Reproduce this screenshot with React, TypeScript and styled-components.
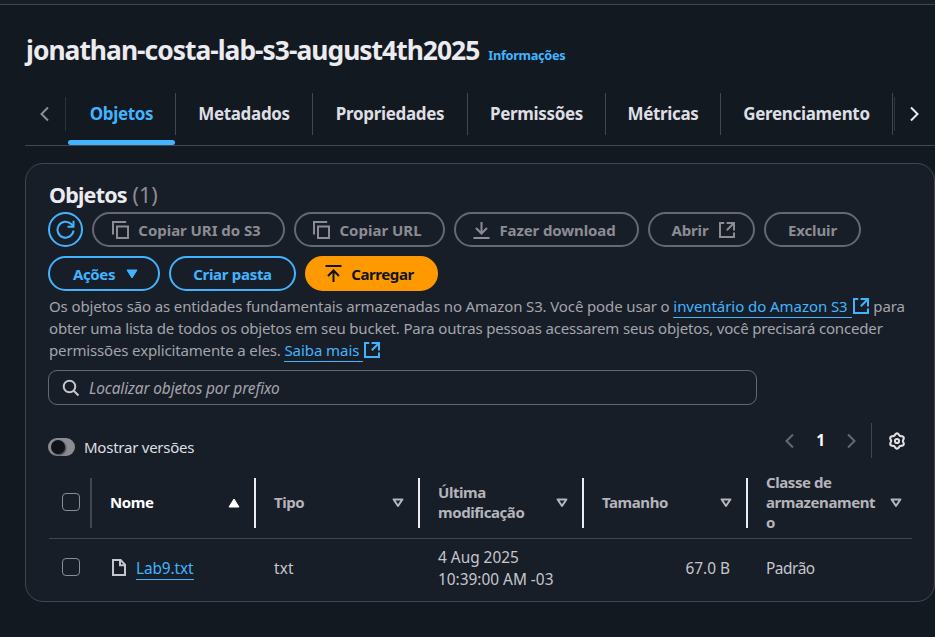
import React from "react";
import styled, { createGlobalStyle, css } from "styled-components";

const color = {
  page: "#131920",
  panel: "#181e27",
  line: "#424650",
  blue: "#42b4ff",
  orange: "#ff9900",
  muted: "#8c8c94",
  mutedLine: "#656871",
  text: "#c6c6cd",
  soft: "#a4a4ad",
  bright: "#ebebf0",
};

const GlobalStyle = createGlobalStyle`
  * { box-sizing: border-box; }
  body {
    margin: 0;
    background: ${color.page};
    color: ${color.text};
    font-family: "Noto Sans", sans-serif;
    font-size: 15.4px;
    line-height: 22px;
    overflow: hidden;
  }
`;

const Page = styled.div`
  width: 935px;
  height: 637px;
  overflow: hidden;
  display: flex;
  flex-direction: column;
`;

const TopStrip = styled.div`
  height: 5px;
  flex: none;
  background: #181d28;
  border-bottom: 1px solid ${color.line};
`;

const TitleBar = styled.header`
  display: flex;
  align-items: baseline;
  gap: 9px;
  height: 88px;
  padding: 27px 0 0 26px;
  flex: none;
  white-space: nowrap;
`;

const Title = styled.h1`
  margin: 0;
  font-size: 26.4px;
  line-height: 36px;
  letter-spacing: -0.98px;
  color: ${color.bright};
`;

const InfoLink = styled.a`
  font-size: 12.8px;
  font-weight: 700;
  letter-spacing: -0.33px;
  color: ${color.blue};
`;

const TabBar = styled.nav`
  display: flex;
  flex: none;
  height: 53px;
  margin-left: 25px;
  border-bottom: 1px solid ${color.line};
`;

const TabScroll = styled.div<{ $side: "left" | "right" }>`
  display: flex;
  align-items: center;
  justify-content: center;
  width: 41px;
  height: 34px;
  margin-top: 4px;
  padding-right: 2px;
  flex: none;
  color: ${(p) => (p.$side === "left" ? color.muted : color.bright)};
  ${(p) =>
    p.$side === "left"
      ? css`border-right: 1px solid #2d323c; margin-right: 2px;`
      : css`border-left: 1px solid #30353f; margin-left: 1px;`}
`;

const Tab = styled.div<{ $width: number; $active?: boolean }>`
  display: flex;
  flex-direction: column;
  justify-content: space-between;
  flex: none;
  width: ${(p) => p.$width}px;
  height: 52px;
  font-size: 17px;
  font-weight: 700;
  letter-spacing: -0.33px;
  color: ${(p) => (p.$active ? color.blue : "#dedee3")};
  &::after {
    content: "";
    height: 5px;
    width: ${(p) => p.$width - 1}px;
    border-radius: 3px;
    background: ${(p) => (p.$active ? color.blue : "transparent")};
  }
`;

const TabLabel = styled.span`
  display: flex;
  align-items: center;
  justify-content: center;
  height: 42px;
  border-right: 1px solid ${color.line};
  white-space: nowrap;
`;

const Panel = styled.main`
  flex: none;
  width: 910px;
  height: 439px;
  margin: 17px 0 0 25px;
  padding: 18px 22px 0 22px;
  border: 1px solid ${color.line};
  border-radius: 18px;
  background: ${color.panel};
`;

const PanelTitle = styled.h2`
  margin: 0 0 0 1px;
  font-size: 21.5px;
  line-height: 26px;
  height: 30px;
  letter-spacing: -0.8px;
  color: ${color.bright};
`;

const Count = styled.span`
  margin-left: 1px;
  font-weight: 400;
  letter-spacing: 0;
  color: ${color.muted};
`;

const ButtonRow = styled.div`
  display: flex;
  gap: 9px;
  margin-bottom: 9px;
`;

const Button = styled.button<{
  $kind?: "active" | "primary";
  $icon?: "start" | "end";
  $width: number;
  $gap?: number;
  $tracking?: number;
}>`
  display: flex;
  align-items: center;
  justify-content: center;
  gap: ${(p) => p.$gap ?? 9}px;
  flex: none;
  width: ${(p) => p.$width}px;
  height: 35px;
  padding: ${(p) => (p.$icon === "start" ? "0 4px 0 0" : p.$icon === "end" ? "0 0 0 3px" : "0")};
  border-radius: 18px;
  font: 700 15px/22px "Noto Sans", sans-serif;
  letter-spacing: ${(p) => p.$tracking ?? -0.15}px;
  white-space: nowrap;
  background: transparent;
  border: 2px solid ${color.mutedLine};
  color: ${color.muted};
  ${(p) => p.$kind === "active" && css`border-color: ${color.blue}; color: ${color.blue};`}
  ${(p) =>
    p.$kind === "primary" &&
    css`border-color: ${color.orange}; background: ${color.orange}; color: #0f141a;`}
`;

const Description = styled.p`
  margin: -5px 0 9px 0;
  width: 868px;
  font-size: 15px;
  color: ${color.soft};
  white-space: nowrap;
`;

const Line = styled.span<{ $tracking: number }>`
  display: block;
  height: 22px;
  padding-left: 1px;
  letter-spacing: ${(p) => p.$tracking}px;
`;

const TextLink = styled.a`
  color: ${color.blue};
  border-bottom: 1px solid ${color.blue};
`;

const InlineLink = styled(TextLink)`
  padding-bottom: 1px;
  letter-spacing: -0.06px;
`;

const InlineIcon = styled.span`
  display: inline-block;
  color: ${color.blue};
  line-height: 0;
  vertical-align: -2px;
  margin: 0 1px 0 1px;
`;

const SearchBox = styled.div`
  display: flex;
  align-items: center;
  gap: 9px;
  width: 709px;
  height: 35px;
  padding-left: 13px;
  border: 1px solid ${color.mutedLine};
  border-radius: 9px;
  color: ${color.text};
`;

const Placeholder = styled.em`
  padding-top: 2px;
  color: ${color.soft};
  letter-spacing: -0.11px;
`;

const ToolsRow = styled.div`
  display: flex;
  align-items: center;
  height: 35px;
  margin-top: 18px;
  color: ${color.bright};
`;

const Toggle = styled.span`
  width: 27px;
  height: 18px;
  margin: 13px 9px 0 0;
  padding: 2px 3px;
  border-radius: 9px;
  background: ${color.muted};
  &::after {
    content: "";
    display: block;
    width: 14px;
    height: 14px;
    border-radius: 50%;
    background: #0f141a;
    box-shadow: 1px 1px 2px #35363c;
  }
`;

const ToggleLabel = styled.span`
  margin-top: 13px;
  font-size: 15px;
  letter-spacing: -0.24px;
  color: #dedee3;
`;

const Pagination = styled.div`
  display: flex;
  align-items: center;
  gap: 21px;
  height: 35px;
  margin-left: auto;
  padding-right: 14px;
  color: ${color.mutedLine};
  border-right: 1px solid ${color.line};
`;

const CurrentPage = styled.b`
  padding-top: 1px;
  color: #fff;
  font-size: 15.4px;
`;

const Settings = styled.span`
  display: flex;
  padding: 0 6px 0 16px;
  color: #dedee3;
`;

const Table = styled.div`
  width: 863px;
  margin: 20px 0 0 1px;
`;

const Row = styled.div<{ $head?: boolean }>`
  display: grid;
  grid-template-columns: 43px 164px 164px 164px 164px 164px;
  align-items: center;
  height: ${(p) => (p.$head ? 61 : 59)}px;
  ${(p) => p.$head && css`padding-bottom: 10px; border-bottom: 1px solid ${color.line};`}
`;

const CheckCell = styled.div<{ $head?: boolean }>`
  display: flex;
  align-items: center;
  height: 50px;
  padding: 0 0 3px 13px;
  border-right: 2px solid ${(p) => (p.$head ? color.line : "transparent")};
`;

const Checkbox = styled.span`
  width: 18px;
  height: 18px;
  border: 1px solid ${color.muted};
  border-radius: 4px;
`;

const HeadCell = styled.div<{ $sorted?: boolean; $last?: boolean }>`
  display: flex;
  align-items: center;
  justify-content: space-between;
  height: 50px;
  padding: 0 ${(p) => (p.$last ? 8 : 14)}px 0 18px;
  border-right: 2px solid ${(p) => (p.$last ? "transparent" : "#ebebf0")};
  font-size: 15px;
  font-weight: 700;
  letter-spacing: -0.43px;
  line-height: 20px;
  white-space: nowrap;
  color: ${(p) => (p.$sorted ? "#fff" : "#b4b4bb")};
`;

const HeadText = styled.span`
  margin-top: -2px;
`;

const Cell = styled.div<{ $right?: boolean; $tracking?: number }>`
  display: flex;
  align-items: center;
  justify-content: ${(p) => (p.$right ? "flex-end" : "flex-start")};
  padding: 0 18px 0 18px;
  letter-spacing: ${(p) => p.$tracking ?? 0}px;
  white-space: nowrap;
`;

const FileCell = styled(Cell)`
  gap: 10px;
  padding-left: 20px;
`;

const FileIconSlot = styled.span`
  display: flex;
  padding-bottom: 2px;
`;

const FileLink = styled(TextLink)`
  height: 22px;
  line-height: 21px;
`;

const Chevron = ({ dir }: { dir: "left" | "right" }) => (
  <svg width="11" height="18" viewBox="0 0 11 18" fill="none" stroke="currentColor" strokeWidth="2">
    <path d={dir === "left" ? "M9 2.5 2.5 9 9 15.5" : "M2 2.5 8.5 9 2 15.5"} />
  </svg>
);

const RefreshIcon = () => (
  <svg width="19" height="19" viewBox="0 0 19 19" fill="none" stroke="currentColor" strokeWidth="2">
    <path d="M17.5 10.5A8 8 0 1 1 15.2 4L17.5 6.2" />
    <path d="M17.5 .8V6.7H11.5" />
  </svg>
);

const CopyIcon = () => (
  <svg width="17" height="18" viewBox="0 0 17 18" fill="none" stroke="currentColor" strokeWidth="2">
    <path d="M1 13.5V1H14.2" />
    <path d="M5 5.5H16V17H5Z" />
  </svg>
);

const DownloadIcon = () => (
  <svg width="17" height="18" viewBox="0 0 17 18" fill="none" stroke="currentColor" strokeWidth="2">
    <path d="M8.5 1V12M3 7 8.5 12.5 14 7M.5 17H16.5" />
  </svg>
);

const UploadIcon = () => (
  <svg width="17" height="18" viewBox="0 0 17 18" fill="none" stroke="currentColor" strokeWidth="2">
    <path d="M8.5 17V6M3 11 8.5 5.5 14 11M.5 1H16.5" />
  </svg>
);

const ExternalIcon = () => (
  <svg width="16" height="16" viewBox="0 0 16 16" fill="none" stroke="currentColor" strokeWidth="2">
    <path d="M5.2 1H1V15H15V10.6" />
    <path d="M7.6 1H15V8.4M15 1 7.8 8.2" />
  </svg>
);

const SearchIcon = () => (
  <svg width="18" height="18" viewBox="0 0 18 18" fill="none" stroke="currentColor" strokeWidth="2">
    <circle cx="7.5" cy="7.5" r="5.8" />
    <path d="M11.7 11.7 16.5 16.5" />
  </svg>
);

const gearOutline = Array.from({ length: 72 }, (_, i) => {
  const angle = (i * Math.PI) / 36;
  const radius = 6.75 + 0.85 * Math.cos(6 * angle);
  return `${(9 + radius * Math.sin(angle)).toFixed(2)} ${(9 - radius * Math.cos(angle)).toFixed(2)}`;
}).join("L");

const GearIcon = () => (
  <svg width="18" height="18" viewBox="0 0 18 18" fill="none" stroke="currentColor" strokeWidth="2.1" strokeLinejoin="round">
    <path d={`M${gearOutline}Z`} />
    <circle cx="9" cy="9" r="2.1" strokeWidth="2" />
  </svg>
);

const FileIcon = () => (
  <svg width="14" height="17" viewBox="0 0 14 17" fill="none" stroke="currentColor" strokeWidth="2">
    <path d="M1 1H8.6L13 5.6V16H1Z" />
    <path d="M8 1V6.2H13" />
  </svg>
);

const CaretDown = () => (
  <svg width="12" height="10" viewBox="0 0 12 10" fill="currentColor" stroke="currentColor" strokeLinejoin="round">
    <path d="M1 1H11L6 9Z" />
  </svg>
);

const SortIcon = ({ up }: { up?: boolean }) => (
  <svg width="12" height="10" viewBox="0 0 12 10" stroke="currentColor" strokeLinejoin="round">
    {up ? (
      <path d="M6 1 11 9H1Z" fill="currentColor" strokeWidth="1" />
    ) : (
      <path d="M1.6 1.4H10.4L6 8Z" fill="none" strokeWidth="2" />
    )}
  </svg>
);

const tabs = [
  { label: "Objetos", width: 108, active: true },
  { label: "Metadados", width: 137 },
  { label: "Propriedades", width: 155 },
  { label: "Permissões", width: 138 },
  { label: "Métricas", width: 115 },
  { label: "Gerenciamento", width: 172 },
];

export default function App() {
  return (
    <Page>
      <GlobalStyle />
      <TopStrip />
      <TitleBar>
        <Title>jonathan-costa-lab-s3-august4th2025</Title>
        <InfoLink>Informações</InfoLink>
      </TitleBar>
      <TabBar>
        <TabScroll $side="left"><Chevron dir="left" /></TabScroll>
        {tabs.map((t) => (
          <Tab key={t.label} $width={t.width} $active={t.active}>
            <TabLabel>{t.label}</TabLabel>
          </Tab>
        ))}
        <TabScroll $side="right"><Chevron dir="right" /></TabScroll>
      </TabBar>
      <Panel>
        <PanelTitle>Objetos <Count>(1)</Count></PanelTitle>
        <ButtonRow>
          <Button $kind="active" $width={35} aria-label="Atualizar"><RefreshIcon /></Button>
          <Button $icon="start" $width={193} $tracking={-0.05}><CopyIcon />Copiar URI do S3</Button>
          <Button $icon="start" $width={151} $tracking={0}><CopyIcon />Copiar URL</Button>
          <Button $icon="start" $width={185} $tracking={-0.1}><DownloadIcon />Fazer download</Button>
          <Button $icon="end" $width={107} $gap={10}>Abrir<ExternalIcon /></Button>
          <Button $width={97} $tracking={-0.1}>Excluir</Button>
        </ButtonRow>
        <ButtonRow>
          <Button $kind="active" $icon="end" $width={112} $gap={11} $tracking={-0.35}>Ações<CaretDown /></Button>
          <Button $kind="active" $width={127} $tracking={-0.3}>Criar pasta</Button>
          <Button $kind="primary" $icon="start" $width={133} $tracking={-0.4}><UploadIcon />Carregar</Button>
        </ButtonRow>
        <Description>
          <Line $tracking={-0.125}>
            Os objetos são as entidades fundamentais armazenadas no Amazon S3. Você pode usar o{" "}
            <InlineLink>inventário do Amazon S3&nbsp;</InlineLink>
            <InlineIcon><ExternalIcon /></InlineIcon> para
          </Line>
          <Line $tracking={-0.17}>
            obter uma lista de todos os objetos em seu bucket. Para outras pessoas acessarem seus objetos, você precisará conceder
          </Line>
          <Line $tracking={-0.15}>
            permissões explicitamente a eles. <InlineLink>Saiba mais&nbsp;</InlineLink>
            <InlineIcon><ExternalIcon /></InlineIcon>
          </Line>
        </Description>
        <SearchBox><SearchIcon /><Placeholder>Localizar objetos por prefixo</Placeholder></SearchBox>
        <ToolsRow>
          <Toggle />
          <ToggleLabel>Mostrar versões</ToggleLabel>
          <Pagination><Chevron dir="left" /><CurrentPage>1</CurrentPage><Chevron dir="right" /></Pagination>
          <Settings><GearIcon /></Settings>
        </ToolsRow>
        <Table>
          <Row $head>
            <CheckCell $head><Checkbox /></CheckCell>
            <HeadCell $sorted><HeadText>Nome</HeadText><SortIcon up /></HeadCell>
            <HeadCell><HeadText>Tipo</HeadText><SortIcon /></HeadCell>
            <HeadCell><HeadText>Última<br />modificação</HeadText><SortIcon /></HeadCell>
            <HeadCell><HeadText>Tamanho</HeadText><SortIcon /></HeadCell>
            <HeadCell $last><HeadText>Classe de<br />armazenament<br />o</HeadText><SortIcon /></HeadCell>
          </Row>
          <Row>
            <CheckCell><Checkbox /></CheckCell>
            <FileCell $tracking={-0.1}><FileIconSlot><FileIcon /></FileIconSlot><FileLink>Lab9.txt</FileLink></FileCell>
            <Cell $tracking={0.2}>txt</Cell>
            <Cell>4 Aug 2025<br />10:39:00 AM -03</Cell>
            <Cell $right>67.0 B</Cell>
            <Cell $tracking={-0.45}>Padrão</Cell>
          </Row>
        </Table>
      </Panel>
    </Page>
  );
}
